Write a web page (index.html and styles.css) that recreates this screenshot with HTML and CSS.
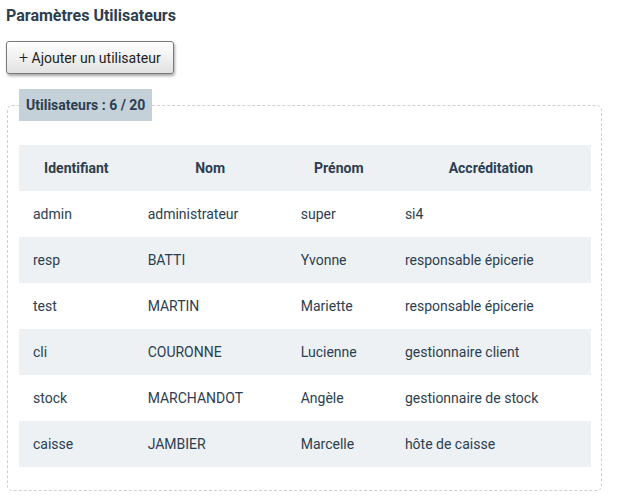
FILE: index.html
```html
<!DOCTYPE html>
<html lang="fr">
<head>
    <meta charset="UTF-8">
    <meta name="viewport" content="width=device-width, initial-scale=1.0">
    <title>Paramètres Utilisateurs</title>

    <link rel="stylesheet" href="styles.css">
</head>
<body>

    <div class="page">
        <h2>Paramètres Utilisateurs</h2>

        <button class="add-btn" type="button"><span class="plus">+</span> Ajouter un utilisateur</button>

        <fieldset class="users-box">
            <legend>Utilisateurs : 6 / 20</legend>

            <table class="users-table">
                <thead>
                    <tr>
                        <th>Identifiant</th>
                        <th>Nom</th>
                        <th>Prénom</th>
                        <th>Accréditation</th>
                    </tr>
                </thead>
                <tbody>
                    <tr>
                        <td>admin</td>
                        <td>administrateur</td>
                        <td>super</td>
                        <td>si4</td>
                    </tr>
                    <tr>
                        <td>resp</td>
                        <td>BATTI</td>
                        <td>Yvonne</td>
                        <td>responsable épicerie</td>
                    </tr>
                    <tr>
                        <td>test</td>
                        <td>MARTIN</td>
                        <td>Mariette</td>
                        <td>responsable épicerie</td>
                    </tr>
                    <tr>
                        <td>cli</td>
                        <td>COURONNE</td>
                        <td>Lucienne</td>
                        <td>gestionnaire client</td>
                    </tr>
                    <tr>
                        <td>stock</td>
                        <td>MARCHANDOT</td>
                        <td>Angèle</td>
                        <td>gestionnaire de stock</td>
                    </tr>
                    <tr>
                        <td>caisse</td>
                        <td>JAMBIER</td>
                        <td>Marcelle</td>
                        <td>hôte de caisse</td>
                    </tr>
                </tbody>
            </table>
        </fieldset>
    </div>

</body>
</html>
```

FILE: styles.css
```css
/* Basic Reset */
* {
    margin: 0;
    padding: 0;
    box-sizing: border-box;
}

body {
    font-family: Roboto, "Liberation Sans", Arial, sans-serif;
    font-size: 14px;
    color: #2c3e50;
    background-color: #ffffff;
}

.page {
    padding: 6px 16px 6px 6px;
}

h2 {
    font-size: 16px;
    font-weight: bold;
    line-height: 20px;
    color: #2c3e50;
}

/* Add button */
.add-btn {
    display: block;
    margin-top: 15px;
    height: 33px;
    padding: 0 12px 0 12px;
    font-family: inherit;
    font-size: 14px;
    color: #222;
    background: linear-gradient(to bottom, #ffffff, #e2e2e2);
    border: 1px solid #7a7a7a;
    border-radius: 3px;
    box-shadow: 1px 2px 3px rgba(0, 0, 0, 0.35);
    cursor: pointer;
}

.add-btn .plus {
    font-size: 16px;
    font-weight: 300;
}

/* Users fieldset */
.users-box {
    margin: 15px 0 0 1px;
    padding: 24px 10px 23px 11px;
    border: 1px dashed #cfcfcf;
    border-radius: 5px;
}

.users-box legend {
    padding: 8px 7px;
    line-height: 16px;
    font-weight: bold;
    background-color: #c5d1d9;
    color: #2c3e50;
}

.users-table {
    width: 100%;
    border-collapse: collapse;
}

.users-table th,
.users-table td {
    padding: 14px;
    line-height: 18px;
    text-align: left;
    font-weight: normal;
}

.users-table th {
    text-align: center;
    font-weight: bold;
}

.users-table thead tr,
.users-table tbody tr:nth-child(even) {
    background-color: #edf1f4;
}
```
